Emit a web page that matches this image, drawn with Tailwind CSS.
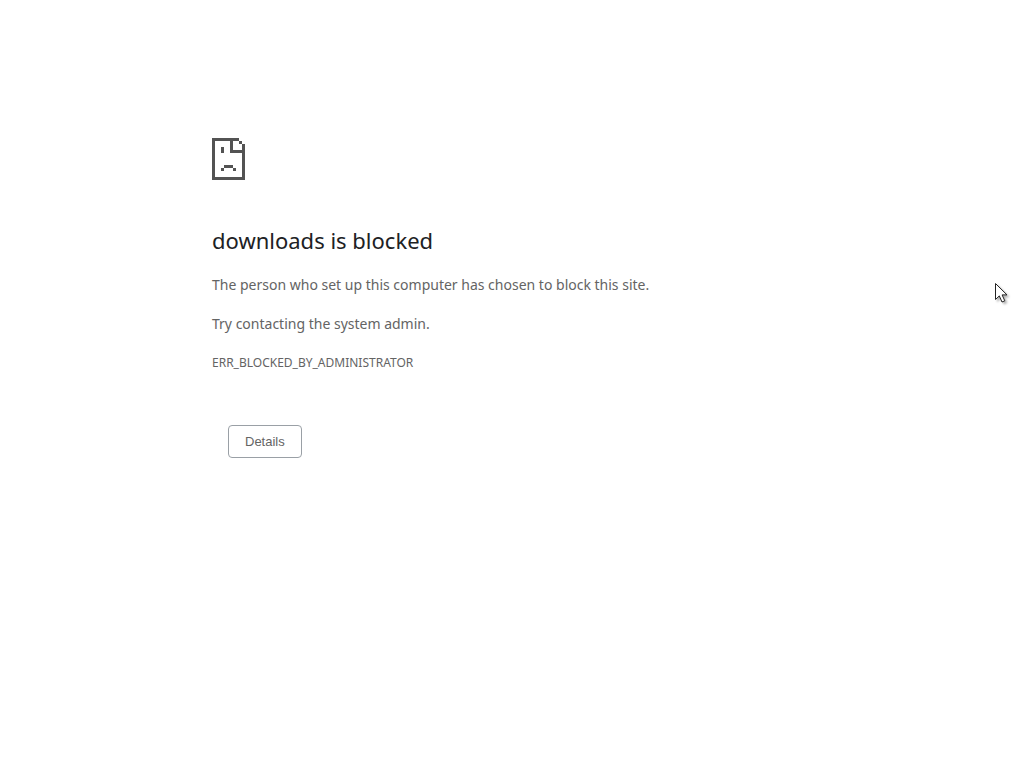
<!DOCTYPE html>
<html lang="en">
<head>
    <meta charset="UTF-8">
    <meta name="viewport" content="width=device-width, initial-scale=1.0">
    <title>downloads</title>
    <script src="https://cdn.jsdelivr.net/npm/@tailwindcss/browser@4"></script>
</head>
<body class="bg-white font-[Tahoma,'Noto_Sans',sans-serif] text-[#646464]">
    <main class="max-w-[600px] mx-auto pt-[138px]">
        <!-- Sad page icon -->
        <svg class="block w-[33px] h-[42px] text-[#535353]" viewBox="0 0 11 14" fill="currentColor" shape-rendering="crispEdges" aria-hidden="true">
            <path d="M0 0h9v1h1v1h1v12H0zM1 1v12h9V5H6V1zM7 1v3h3V2H9V1z" fill-rule="evenodd"/>
            <path d="M3 3h1v2H3zM4 9h3v1H4zM3 10h1v1H3zM7 10h1v1H7z"/>
        </svg>

        <!-- Message -->
        <h1 class="mt-[45px] text-[22px] leading-[30px] text-[#202124]">downloads is blocked</h1>
        <div class="mt-[18px] flex flex-col gap-[15px] text-sm leading-6">
            <p>The person who set up this computer has chosen to block this site.</p>
            <p>Try contacting the system admin.</p>
            <p class="text-xs leading-6">ERR_BLOCKED_BY_ADMINISTRATOR</p>
        </div>

        <button type="button" class="mt-[50px] ml-4 h-[33px] px-4 border border-[#9aa0a6] rounded bg-white font-['Liberation_Sans',Arial,sans-serif] text-[13px]">Details</button>
    </main>

    <!-- Mouse pointer -->
    <svg class="absolute top-[283px] right-[13px] w-4 h-5 drop-shadow-[2px_2px_1px_rgb(0_0_0/0.3)]" viewBox="0 0 16 20" aria-hidden="true">
        <path d="M.5 .5v16l3.8-3.6 2.7 6.1 2.8-1.2-2.7-5.9h4.9z" fill="#fff" stroke="#222"/>
    </svg>
</body>
</html>
